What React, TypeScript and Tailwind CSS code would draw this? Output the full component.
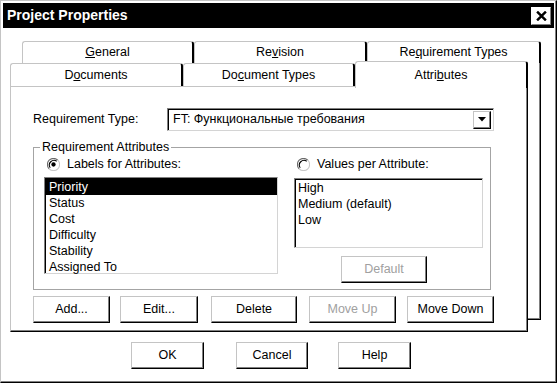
import React from 'react';

const font = { fontFamily: '"Liberation Sans", Arial, sans-serif' };

function Button({
  children,
  width,
  disabled,
  className = '',
}: {
  children: React.ReactNode;
  width: string;
  disabled?: boolean;
  className?: string;
}) {
  return (
    <div
      className={`${width} h-[27px] flex items-center justify-center bg-white border border-t-[#c4c4c4] border-l-[#c4c4c4] border-r-black border-b-black shadow-[inset_-1px_-1px_0_#808080] text-[12.5px] ${
        disabled ? 'text-[#a0a0a0]' : 'text-black'
      } ${className}`}
    >
      {children}
    </div>
  );
}

function Radio({ checked }: { checked?: boolean }) {
  return (
    <svg width="13" height="13" viewBox="0 0 12 12">
      <circle cx="6" cy="6" r="5.5" fill="white" />
      <path d="M10 2 A5.5 5.5 0 0 0 2 10" fill="none" stroke="#6a6a6a" strokeWidth="1" />
      <path d="M10 2 A5.5 5.5 0 0 1 2 10" fill="none" stroke="#c8c8c8" strokeWidth="1" />
      <path d="M9 3 A4.3 4.3 0 0 0 3 9" fill="none" stroke="#000" strokeWidth="1" />
      {checked && <circle cx="6" cy="6" r="2" fill="black" />}
    </svg>
  );
}

function Tab({
  children,
  width,
  selected,
}: {
  children: React.ReactNode;
  width: string;
  selected?: boolean;
}) {
  return (
    <div
      className={`${width} ${
        selected ? 'h-[27px] -mb-px z-10' : 'h-[23px] mt-[2px]'
      } relative flex items-center justify-center bg-white rounded-t-[3px] border-t border-l border-r-2 border-t-[#c4c4c4] border-l-[#c4c4c4] border-r-black text-[12.5px] text-black`}
    >
      {children}
    </div>
  );
}

function BackTab({ children, width }: { children: React.ReactNode; width: string }) {
  return (
    <div
      className={`${width} h-[22px] flex items-center justify-center bg-white rounded-t-[3px] border-t border-l border-r-2 border-t-[#c4c4c4] border-l-[#c4c4c4] border-r-black text-[12.5px] text-black`}
    >
      {children}
    </div>
  );
}

const attributes = ['Priority', 'Status', 'Cost', 'Difficulty', 'Stability', 'Assigned To'];
const values = ['High', 'Medium (default)', 'Low'];

export default function App() {
  return (
    <div
      style={font}
      className="relative w-[557px] h-[383px] bg-white border border-t-[#c4c4c4] border-l-[#c4c4c4] border-r-black border-b-black shadow-[inset_-1px_-1px_0_#808080] overflow-hidden"
    >
      {/* title bar */}
      <div className="mx-[2px] mt-[2px] h-[25px] bg-black flex items-center justify-between pl-[4px] pr-[3px]">
        <span className="text-white font-bold text-[14px]">Project Properties</span>
        <div className="w-[20px] h-[18px] bg-white border border-t-white border-l-white border-r-[#808080] border-b-[#808080] flex items-center justify-center">
          <svg width="11" height="10" viewBox="0 0 10 9">
            <path d="M1 0.5 L9 8.5 M9 0.5 L1 8.5" stroke="black" strokeWidth="2.2" />
          </svg>
        </div>
      </div>

      {/* back tab row (behind the active page) */}
      <div className="absolute left-[21px] top-[40px] w-[519px]">
        <div className="flex">
          <BackTab width="w-[172px]">
            <span>
              <u>G</u>eneral
            </span>
          </BackTab>
          <BackTab width="w-[173px]">
            <span>
              Re<u>v</u>ision
            </span>
          </BackTab>
          <BackTab width="w-[174px]">
            <span>
              Re<u>q</u>uirement Types
            </span>
          </BackTab>
        </div>
        <div className="h-[257px] border-r border-b border-r-black border-b-black shadow-[inset_-1px_-1px_0_#808080]" />
      </div>

      {/* front tab row + page */}
      <div className="relative z-10 mt-[33px] ml-[9px] w-[518px]">
        <div className="flex items-start h-[25px]">
          <Tab width="w-[173px]">
            <span>
              D<u>o</u>cuments
            </span>
          </Tab>
          <Tab width="w-[172px]">
            <span>
              Do<u>c</u>ument Types
            </span>
          </Tab>
          <Tab width="w-[173px]" selected>
            <span>
              Attri<u>b</u>utes
            </span>
          </Tab>
        </div>

        <div className="h-[246px] bg-white border border-t-[#c4c4c4] border-l-[#c4c4c4] border-r-black border-b-black shadow-[inset_-1px_-1px_0_#808080]">
          {/* requirement type */}
          <div className="flex items-center mt-[21px] ml-[22px]">
            <span className="w-[134px] text-[12.5px] text-black">Requirement Type:</span>
            <div className="w-[327px] h-[23px] flex items-center justify-between border border-t-[#808080] border-l-[#808080] border-r-[#d4d4d4] border-b-[#d4d4d4] shadow-[inset_1px_1px_0_#000] pl-[5px] pr-[2px]">
              <span className="text-[12.5px] text-black">FT: Функциональные требования</span>
              <div className="w-[18px] h-[18px] flex items-center justify-center border border-t-[#c4c4c4] border-l-[#c4c4c4] border-r-black border-b-black shadow-[inset_-1px_-1px_0_#808080]">
                <svg width="8" height="5" viewBox="0 0 8 5">
                  <path d="M0 0 H8 L4 4.5 Z" fill="black" />
                </svg>
              </div>
            </div>
          </div>

          {/* requirement attributes group */}
          <fieldset className="ml-[22px] mt-[9px] w-[458px] h-[150px] border border-[#a4a4a4]">
            <legend className="ml-[6px] px-[2px] text-[12.5px] leading-[15px] text-black">
              Requirement Attributes
            </legend>
            <div className="flex pl-[10px] pt-[1px]">
              <div className="w-[234px]">
                <div className="flex items-center gap-[7px] pl-[3px] h-[16px]">
                  <Radio checked />
                  <span className="text-[12.5px] text-black">Labels for Attributes:</span>
                </div>
                <div className="mt-[5px] h-[97px] border border-t-[#808080] border-l-[#808080] border-r-[#d4d4d4] border-b-[#d4d4d4] shadow-[inset_1px_1px_0_#000] pl-px pt-px">
                  {attributes.map((a, i) => (
                    <div
                      key={a}
                      className={`h-[16px] leading-[16px] pl-[3px] text-[12.5px] ${
                        i === 0 ? 'bg-black text-white' : 'text-black'
                      }`}
                    >
                      {a}
                    </div>
                  ))}
                </div>
              </div>

              <div className="w-[189px] ml-[16px]">
                <div className="flex items-center gap-[7px] pl-[3px] h-[16px]">
                  <Radio />
                  <span className="text-[12.5px] text-black">Values per Attribute:</span>
                </div>
                <div className="mt-[6px] h-[70px] border border-t-[#808080] border-l-[#808080] border-r-[#d4d4d4] border-b-[#d4d4d4] shadow-[inset_1px_1px_0_#000] pl-px pt-px">
                  {values.map((v) => (
                    <div key={v} className="h-[16px] leading-[16px] pl-[2px] text-[12.5px] text-black">
                      {v}
                    </div>
                  ))}
                </div>
                <Button width="w-[86px]" disabled className="mt-[8px] ml-[47px]">
                  Default
                </Button>
              </div>
            </div>
          </fieldset>

          {/* action buttons */}
          <div className="flex mt-[6px] ml-[22px]">
            <Button width="w-[77px]">Add...</Button>
            <Button width="w-[78px]" className="ml-[10px]">
              Edit...
            </Button>
            <Button width="w-[86px]" className="ml-[13px]">
              Delete
            </Button>
            <Button width="w-[87px]" disabled className="ml-[12px]">
              Move Up
            </Button>
            <Button width="w-[87px]" className="ml-[11px]">
              Move Down
            </Button>
          </div>
        </div>
      </div>

      {/* dialog buttons */}
      <div className="flex mt-[10px] ml-[130px]">
        <Button width="w-[73px]">OK</Button>
        <Button width="w-[72px]" className="ml-[32px]">
          Cancel
        </Button>
        <Button width="w-[73px]" className="ml-[30px]">
          Help
        </Button>
      </div>
    </div>
  );
}
